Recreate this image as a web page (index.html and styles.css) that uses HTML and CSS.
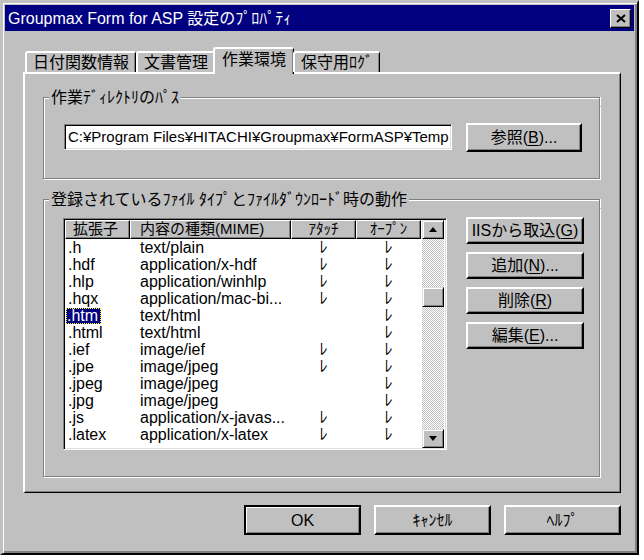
FILE: index.html
```html
<!DOCTYPE html>
<html lang="ja">
<head>
<meta charset="utf-8">
<title>Groupmax Form for ASP 設定のプロパティ</title>
<link rel="stylesheet" href="styles.css">
</head>
<body>
<div class="window">
  <div class="titlebar">
    <span class="title">Groupmax Form for ASP 設定のﾌﾟﾛﾊﾟﾃｨ</span>
    <span class="close"><svg width="10" height="9" viewBox="0 0 10 9"><path d="M1 1 L9 8 M9 1 L1 8" stroke="#000" stroke-width="2" fill="none"/></svg></span>
  </div>
  <div class="main">
    <div class="tabs">
      <div class="tab">日付関数情報</div>
      <div class="tab">文書管理</div>
      <div class="tab active">作業環境</div>
      <div class="tab">保守用ﾛｸﾞ</div>
    </div>
    <div class="panel">
      <div class="group g1">
        <div class="group-head"><span class="group-label">作業ﾃﾞｨﾚｸﾄﾘのﾊﾟｽ</span></div>
        <div class="group-body g1-body">
          <div class="field">C:¥Program Files¥HITACHI¥Groupmax¥FormASP¥Temp</div>
          <div class="btn browse">参照(<u>B</u>)...</div>
        </div>
      </div>
      <div class="group g2">
        <div class="group-head"><span class="group-label">登録されているﾌｧｲﾙ ﾀｲﾌﾟとﾌｧｲﾙﾀﾞｳﾝﾛｰﾄﾞ時の動作</span></div>
        <div class="group-body g2-body">
          <div class="listview">
            <div class="table">
              <div class="hrow">
                <div class="hcell c-ext">拡張子</div>
                <div class="hcell c-mime">内容の種類(MIME)</div>
                <div class="hcell c-chk">ｱﾀｯﾁ</div>
                <div class="hcell c-chk">ｵｰﾌﾟﾝ</div>
              </div>
              <div class="row"><span class="c-ext">.h</span><span class="c-mime">text/plain</span><span class="c-chk">ﾚ</span><span class="c-chk">ﾚ</span></div>
              <div class="row"><span class="c-ext">.hdf</span><span class="c-mime">application/x-hdf</span><span class="c-chk">ﾚ</span><span class="c-chk">ﾚ</span></div>
              <div class="row"><span class="c-ext">.hlp</span><span class="c-mime">application/winhlp</span><span class="c-chk">ﾚ</span><span class="c-chk">ﾚ</span></div>
              <div class="row"><span class="c-ext">.hqx</span><span class="c-mime">application/mac-bi...</span><span class="c-chk">ﾚ</span><span class="c-chk">ﾚ</span></div>
              <div class="row"><span class="c-ext"><span class="sel">.htm</span></span><span class="c-mime">text/html</span><span class="c-chk"></span><span class="c-chk">ﾚ</span></div>
              <div class="row"><span class="c-ext">.html</span><span class="c-mime">text/html</span><span class="c-chk"></span><span class="c-chk">ﾚ</span></div>
              <div class="row"><span class="c-ext">.ief</span><span class="c-mime">image/ief</span><span class="c-chk">ﾚ</span><span class="c-chk">ﾚ</span></div>
              <div class="row"><span class="c-ext">.jpe</span><span class="c-mime">image/jpeg</span><span class="c-chk">ﾚ</span><span class="c-chk">ﾚ</span></div>
              <div class="row"><span class="c-ext">.jpeg</span><span class="c-mime">image/jpeg</span><span class="c-chk"></span><span class="c-chk">ﾚ</span></div>
              <div class="row"><span class="c-ext">.jpg</span><span class="c-mime">image/jpeg</span><span class="c-chk"></span><span class="c-chk">ﾚ</span></div>
              <div class="row"><span class="c-ext">.js</span><span class="c-mime">application/x-javas...</span><span class="c-chk">ﾚ</span><span class="c-chk">ﾚ</span></div>
              <div class="row"><span class="c-ext">.latex</span><span class="c-mime">application/x-latex</span><span class="c-chk">ﾚ</span><span class="c-chk">ﾚ</span></div>
            </div>
            <div class="scrollbar">
              <div class="sb-btn"><svg width="8" height="5" viewBox="0 0 8 5"><path d="M4 0 L8 5 L0 5 Z" fill="#000"/></svg></div>
              <div class="sb-track sb-upper"></div>
              <div class="sb-thumb"></div>
              <div class="sb-track sb-lower"></div>
              <div class="sb-btn"><svg width="8" height="5" viewBox="0 0 8 5"><path d="M0 0 L8 0 L4 5 Z" fill="#000"/></svg></div>
            </div>
          </div>
          <div class="side-buttons">
            <div class="btn side">IISから取込(<u>G</u>)</div>
            <div class="btn side">追加(<u>N</u>)...</div>
            <div class="btn side">削除(<u>R</u>)</div>
            <div class="btn side">編集(<u>E</u>)...</div>
          </div>
        </div>
      </div>
    </div>
    <div class="footer">
      <div class="btn foot default">OK</div>
      <div class="btn foot">ｷｬﾝｾﾙ</div>
      <div class="btn foot">ﾍﾙﾌﾟ</div>
    </div>
  </div>
</div>
</body>
</html>
```
FILE: styles.css
```css
* { box-sizing: border-box; }
html, body { margin: 0; padding: 0; background: #fff; }
body {
  font-family: "Liberation Sans", "Noto Sans CJK JP", sans-serif;
  font-size: 16px;
  line-height: 17px;
  color: #000;
}
u { text-decoration: underline; text-underline-offset: 2px; }

.window {
  width: 639px;
  height: 555px;
  background: #c0c0c0;
  border-style: solid;
  border-width: 3px 2px 2px 3px;
  border-color: #c0c0c0 #000 #000 #c0c0c0;
  box-shadow: inset 1px 1px #fff, inset -2px -2px #808080;
  padding: 2px 3px 3px 2px;
  display: flex;
  flex-direction: column;
}

.titlebar {
  height: 26px;
  background: #000080;
  color: #fff;
  display: flex;
  align-items: center;
  justify-content: space-between;
  padding: 0 3px 0 3px;
}
.title { white-space: nowrap; font-size: 16px; }
.close {
  width: 21px;
  height: 19px;
  background: #c0c0c0;
  border: 1px solid;
  border-color: #fff #000 #000 #fff;
  box-shadow: inset -1px -1px #808080;
  display: flex;
  align-items: center;
  justify-content: center;
}

.main {
  flex: 1;
  display: flex;
  flex-direction: column;
  padding: 16px 13px 0 18px;
}

.tabs {
  display: flex;
  align-items: flex-end;
  height: 25px;
  padding-left: 2px;
  position: relative;
  z-index: 1;
}
.tab {
  height: 21px;
  padding: 0 6px;
  border-style: solid;
  border-width: 2px 1px 0 2px;
  border-color: #fff #000 #000 #fff;
  border-radius: 3px 3px 0 0;
  box-shadow: inset -1px 0 #808080;
  line-height: 19px;
  white-space: nowrap;
}
.tab.active {
  height: 27px;
  margin: 0 -1px -2px -2px;
  padding: 0 7px;
  background: #c0c0c0;
  line-height: 21px;
}

.panel {
  height: 421px;
  border-style: solid;
  border-width: 2px 1px 1px 2px;
  border-color: #fff #000 #000 #fff;
  box-shadow: inset -1px -1px #808080;
  padding: 16px 20px 0 18px;
}

.group-head {
  display: flex;
  height: 16px;
  line-height: 16px;
}
.group-head::before {
  content: "";
  width: 5px;
  height: 8px;
  align-self: flex-end;
  border-top: 1px solid #808080;
  border-left: 1px solid #808080;
  box-shadow: inset 1px 1px #fff;
}
.group-head::after {
  content: "";
  flex: 1;
  height: 8px;
  align-self: flex-end;
  border-top: 1px solid #808080;
  border-right: 1px solid #808080;
  box-shadow: inset 0 1px #fff, 1px 0 #fff;
}
.group-label { padding: 0 2px; white-space: nowrap; }
.group-body {
  border: 1px solid #808080;
  border-top: none;
  box-shadow: inset 1px 0 #fff, 1px 1px #fff;
}

.g1-body {
  height: 73px;
  display: flex;
  align-items: flex-start;
  gap: 14px;
  padding: 17px 17px 0 20px;
}
.field {
  flex: 1;
  height: 26px;
  margin-top: 1px;
  background: #fff;
  border-style: solid;
  border-width: 1px;
  border-color: #808080 #fff #fff #808080;
  box-shadow: inset 1px 1px #000, inset -1px -1px #dfdfdf;
  padding: 0 3px;
  font-size: 15px;
  line-height: 24px;
  white-space: nowrap;
  overflow: hidden;
}

.btn {
  background: #c0c0c0;
  border-style: solid;
  border-width: 2px 2px 2px 2px;
  border-color: #fff #000 #000 #fff;
  box-shadow: inset -1px -1px #808080;
  display: flex;
  align-items: center;
  justify-content: center;
  white-space: nowrap;
}
.browse { width: 116px; height: 29px; }

.g2 { margin-top: 13px; }
.g2-body {
  height: 269px;
  display: flex;
  align-items: flex-start;
  gap: 19px;
  padding: 10px 14px 0 19px;
}

.listview {
  width: 384px;
  height: 232px;
  display: flex;
  background: #fff;
  border-style: solid;
  border-width: 1px;
  border-color: #808080 #fff #fff #808080;
  box-shadow: inset 1px 1px #000, inset -1px -1px #dfdfdf;
  padding: 1px 2px 1px 1px;
}
.table {
  flex: 1;
  overflow: hidden;
}
.hrow, .row {
  display: grid;
  grid-template-columns: 65px 161px 65px 65px;
}
.hrow { height: 19px; }
.hcell {
  background: #c0c0c0;
  border-style: solid;
  border-width: 1px;
  border-color: #fff #000 #000 #fff;
  box-shadow: inset -1px -1px #808080;
  font-size: 15px;
  line-height: 16px;
  white-space: nowrap;
  overflow: hidden;
}
.hcell.c-ext { padding-left: 7px; }
.hcell.c-mime { padding-left: 9px; }
.hcell.c-chk { text-align: center; }
.row { height: 17px; line-height: 17px; }
.row .c-ext { padding-left: 3px; }
.row .c-mime { padding-left: 10px; white-space: nowrap; }
.row .c-chk { text-align: center; }
.sel {
  display: inline-block;
  background: #000080;
  color: #fff;
  outline: 1px dotted #ffff00;
  outline-offset: -1px;
  padding: 0 3px 0 1px;
  margin-left: -2px;
  line-height: 16px;
}

.scrollbar {
  width: 22px;
  display: flex;
  flex-direction: column;
}
.sb-btn {
  height: 19px;
  background: #c0c0c0;
  border-style: solid;
  border-width: 1px;
  border-color: #dfdfdf #000 #000 #dfdfdf;
  box-shadow: inset 1px 1px #fff, inset -1px -1px #808080;
  display: flex;
  align-items: center;
  justify-content: center;
}
.sb-track {
  background-color: #fff;
  background-image: repeating-conic-gradient(#c0c0c0 0% 25%, #fff 0% 50%);
  background-size: 2px 2px;
}
.sb-upper { height: 48px; }
.sb-lower { flex: 1; }
.sb-thumb {
  height: 20px;
  background: #c0c0c0;
  border-style: solid;
  border-width: 1px;
  border-color: #dfdfdf #000 #000 #dfdfdf;
  box-shadow: inset 1px 1px #fff, inset -1px -1px #808080;
}

.side-buttons {
  display: flex;
  flex-direction: column;
  gap: 8px;
  margin-top: -1px;
}
.side { width: 118px; height: 27px; }

.footer {
  display: flex;
  justify-content: flex-end;
  gap: 13px;
  margin-top: 12px;
}
.foot { width: 117px; height: 30px; }
.default {
  border: 2px solid #000;
  box-shadow: inset 1px 1px #fff, inset -1px -1px #808080;
}
```
